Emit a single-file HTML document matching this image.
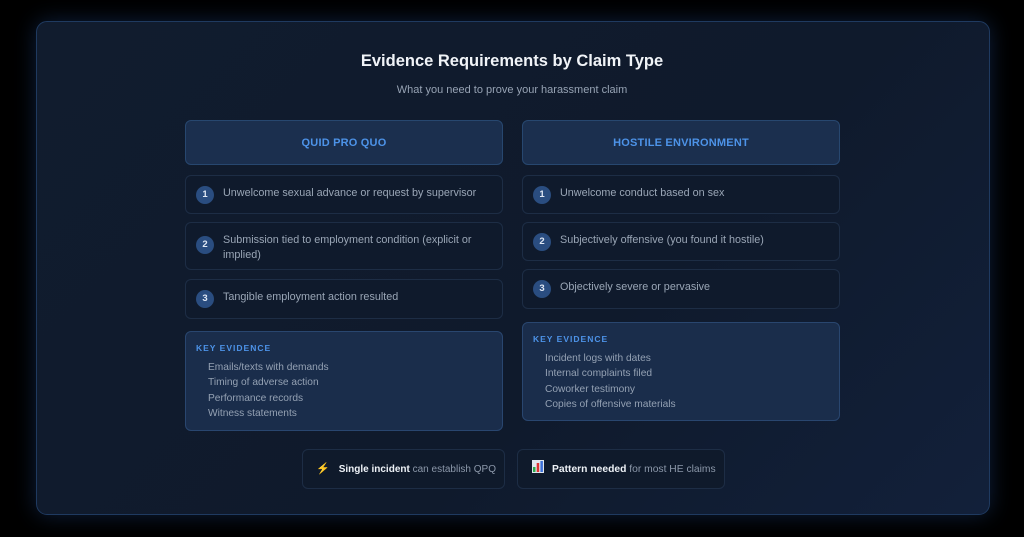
<!DOCTYPE html>
<html><head><style>
*{box-sizing:border-box;margin:0;padding:0}
body{width:1024px;height:537px;background:#000;font-family:"Liberation Sans",sans-serif;position:relative;overflow:hidden}
.card{position:absolute;left:36px;top:21px;width:954px;height:494px;border-radius:11px;border:1px solid #1f3a60;background:linear-gradient(135deg,#111c2e,#0f1a2c 60%,#12203a);box-shadow:0 0 22px rgba(40,90,170,.35)}
h1{position:absolute;left:0;width:1024px;top:52px;text-align:center;color:#f1f4f8;font-size:16.5px;font-weight:bold}
.sub{position:absolute;left:0;width:1024px;top:84px;text-align:center;color:#97a3b4;font-size:11px}
.hdr{position:absolute;height:45px;border-radius:6px;border:1px solid #27476f;background:#1b2f4e;color:#4d93e8;font-weight:bold;font-size:11px;display:flex;align-items:center;justify-content:center;letter-spacing:.2px}
.item{position:absolute;border-radius:6px;border:1px solid #1d2d45;background:#0f1a2c;color:#9aa6b6;font-size:10.8px;line-height:15px;padding:10px 10px 0 37px}
.num{position:absolute;left:10px;top:10px;width:18px;height:18px;border-radius:50%;background:#2a4d80;color:#e0e8f4;font-size:9.5px;font-weight:bold;text-align:center;line-height:18px}
.ev{position:absolute;border-radius:6px;border:1px solid #29466f;background:#1a2d4b;padding:11px 10px 0 10px}
.ev b{display:block;color:#4d93e8;font-size:8.5px;letter-spacing:1px;margin-bottom:7px}
.ev div{color:#94a1b3;font-size:10.2px;line-height:15.3px;padding-left:12px}
.pill{position:absolute;top:449px;height:40px;border-radius:6px;border:1px solid #1d2d45;background:#0f1a2b;color:#8c98aa;font-size:10.3px;line-height:39px;padding-left:14px;white-space:nowrap}
.pill strong{color:#eef2f7}
</style></head><body>
<div class="card"></div>
<h1>Evidence Requirements by Claim Type</h1>
<div class="sub">What you need to prove your harassment claim</div>

<div class="hdr" style="left:185px;top:120px;width:318px">QUID PRO QUO</div>
<div class="item" style="left:185px;top:175px;width:318px;height:39px"><span class="num">1</span>Unwelcome sexual advance or request by supervisor</div>
<div class="item" style="left:185px;top:222px;width:318px;height:48px"><span class="num" style="top:13px">2</span>Submission tied to employment condition (explicit or implied)</div>
<div class="item" style="left:185px;top:279px;width:318px;height:40px"><span class="num">3</span>Tangible employment action resulted</div>
<div class="ev" style="left:185px;top:331px;width:318px;height:100px"><b>KEY EVIDENCE</b><div>Emails/texts with demands</div><div>Timing of adverse action</div><div>Performance records</div><div>Witness statements</div></div>

<div class="hdr" style="left:522px;top:120px;width:318px">HOSTILE ENVIRONMENT</div>
<div class="item" style="left:522px;top:175px;width:318px;height:39px"><span class="num">1</span>Unwelcome conduct based on sex</div>
<div class="item" style="left:522px;top:222px;width:318px;height:39px"><span class="num">2</span>Subjectively offensive (you found it hostile)</div>
<div class="item" style="left:522px;top:269px;width:318px;height:40px"><span class="num">3</span>Objectively severe or pervasive</div>
<div class="ev" style="left:522px;top:322px;width:318px;height:99px"><b>KEY EVIDENCE</b><div>Incident logs with dates</div><div>Internal complaints filed</div><div>Coworker testimony</div><div>Copies of offensive materials</div></div>

<div class="pill" style="left:302px;width:203px;font-size:10px;padding-left:13px"><span style="color:#f5b82e;margin-right:9px;font-size:11px">⚡</span><strong>Single incident</strong> can establish QPQ</div>
<div class="pill" style="left:517px;width:208px"><svg width="12" height="13" style="margin-right:8px;vertical-align:-1px"><rect width="12" height="13" fill="#dfe6ee"/><rect x="1" y="7" width="2.5" height="5" fill="#2aa84a"/><rect x="4.7" y="3" width="2.5" height="9" fill="#d33"/><rect x="8.4" y="1" width="2.5" height="11" fill="#3b6fd8"/></svg><strong>Pattern needed</strong> for most HE claims</div>
</body></html>
